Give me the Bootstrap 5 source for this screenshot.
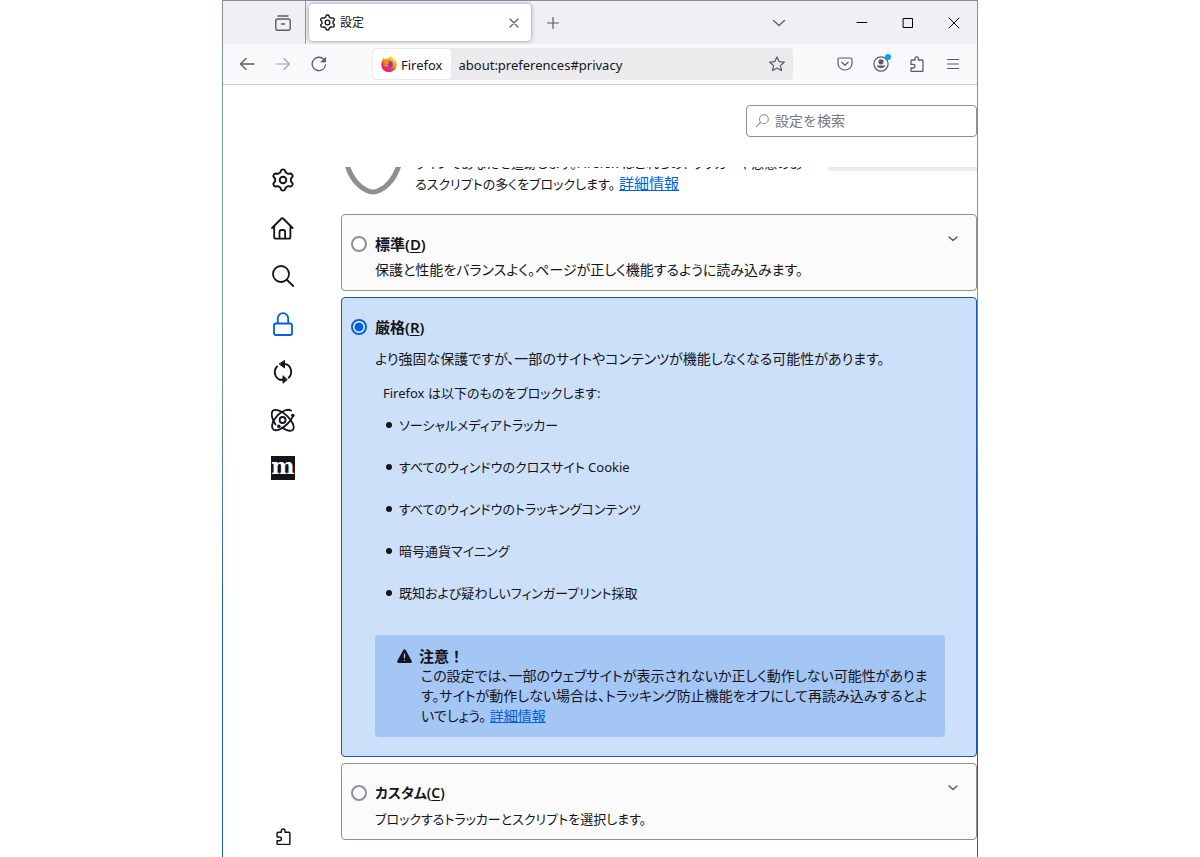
<!DOCTYPE html>
<html lang="ja">
<head>
<meta charset="utf-8">
<meta name="viewport" content="width=device-width, initial-scale=1">
<title>設定</title>
<link rel="stylesheet" href="https://cdn.jsdelivr.net/npm/bootstrap@5.3.0/dist/css/bootstrap.min.css">
<style>
:root { --ink: #15141a; --accent: #0060df; --line: #8f8f9d; --chrome: #5b5b66; }
body { font-family: "Noto Sans", "Noto Sans CJK JP", sans-serif; font-size: 14px; line-height: 20px; color: var(--ink); background: #fff; font-feature-settings: "palt"; }
svg { display: block; flex: none; fill: none; stroke: currentColor; stroke-linecap: round; stroke-linejoin: round; }
svg.solid { stroke: none; }
svg.shield { stroke: #8f8f8f; stroke-linecap: butt; }
a { color: var(--accent); }
.window { width: 63%; border: 1px solid; border-bottom: 0; border-image: linear-gradient(#7f909f, #76929f 45%, #1d5fb0 70%, #1d5fb0) 1; }
.latin { font-family: "Noto Sans", sans-serif; font-size: 13px; }
.icon-btn { border: 0; padding: 0; background: none; color: var(--chrome); display: flex; align-items: center; justify-content: center; flex: none; }
.tabstrip { height: 43px; background: #efeff4; }
.view-slot { width: 83px; padding-right: 14px; border-right: 1px solid #8f98a0; }
.browser-tab { width: 222px; height: 37px; border-radius: 4px; background: #fff; box-shadow: 0 0 4px rgba(0,0,0,.4); margin-left: 3px; padding: 0 10px; font-size: 12px; }
.toolbar { height: 41px; background: #f9f9fb; border-bottom: 1px solid #cccccf; padding: 0 16px; }
.urlbar { height: 32px; border-radius: 4px; background: #ebebed; margin-left: 45px; margin-right: 44px; min-width: 0; }
.identity { height: 30px; background: #fff; border-radius: 4px; padding: 0 8px; margin-left: 1px; }
.identity span { padding-top: 2px; }
.urlbar input { border: 0; background: none; outline: 0; min-width: 0; color: var(--ink); padding: 2px 8px 0; }
.account { position: relative; }
.account::after { content: ""; position: absolute; top: -2px; right: -2px; width: 6px; height: 6px; border-radius: 50%; background: #00a5f5; }
.side-nav { width: 118px; padding: 1px 0 9px 48px; }
.side-nav a { color: var(--ink); height: 24px; width: 24px; display: flex; align-items: center; justify-content: center; }
.side-nav a.active { color: var(--accent); }
.side-nav .moz { background: var(--ink); color: #fff; font: bold 22px/20px "DejaVu Serif", serif; text-decoration: none; padding-bottom: 4px; }
.page-head { height: 82px; padding-top: 20px; }
.search-box { width: 231px; height: 32px; border: 1px solid var(--line); border-radius: 4px; padding: 0 8px; color: #8a8a90; }
.search-box input { border: 0; outline: 0; background: none; min-width: 0; padding: 0 0 0 5px; }
.search-box input::placeholder { color: #77777c; opacity: 1; }
main { min-width: 0; }
.kana { font-size: 13px; }
.intro { height: 28px; }
.intro a { font-size: 15px; margin-left: 4px; }
.intro-text { margin-left: 14px; margin-bottom: 1px; }
.meter { width: 150px; height: 4px; background: #ececee; border-radius: 0 0 0 4px; }
.option { border: 1px solid var(--line); border-radius: 4px; background: #fbfbfb; padding: 16px 31px 7px 33px; line-height: 26px; }
.option.selected { border-color: #1259b8; background: #cce0f9; padding-bottom: 19px; }
.option-head { margin-left: -24px; margin-right: -14px; }
.option-head .form-check-input { width: 16px; height: 16px; margin: 0 8px 0 0; border: 2px solid var(--line); background: #fff; box-shadow: none; flex: none; }
.option-head .form-check-input:checked { border-color: var(--accent); background: radial-gradient(circle, var(--accent) 4px, #fff 5px); }
.option label { font-size: 15px; font-weight: 600; }
.option.kana label { font-size: 14px; }
.option u { text-underline-offset: 2px; }
.blocklist { padding-left: 11px; gap: 16px; margin: 6px 0 29px; }
.blocklist li { display: flex; align-items: center; gap: 7px; }
.blocklist li::before { content: ""; width: 6px; height: 6px; border-radius: 50%; background: currentColor; }
.notice { background: #a4c6f4; border-radius: 4px; padding: 11px 22px; line-height: 20px; }
.notice-title { gap: 7px; font-size: 15px; font-feature-settings: normal; }
.notice-body { padding-left: 24px; }
</style>
</head>
<body>
<div class="window mx-auto min-vh-100 d-flex flex-column">
  <header>
    <div class="tabstrip d-flex align-items-center">
      <div class="view-slot d-flex align-items-center justify-content-end align-self-stretch">
        <button class="icon-btn" aria-label="Firefox View"><svg width="16" height="16" viewBox="0 0 16 16" stroke-width="1.400"><path d="M3 1h10M2.800 4h10.400q2 0 2 2v7.200q0 2-2 2H2.800q-2 0-2-2V6q0-2 2-2zM6.500 9h3"/></svg></button>
      </div>
      <div class="browser-tab d-flex align-items-center">
        <svg width="17" height="17" viewBox="0 0 24 24" stroke-width="1.900"><path d="M9.300 4.500L10 2.500Q10.360 1.400 12 1.400T14 2.500L14.700 4.500L17.140 5.870L19.200 5.500Q20.500 5.300 21.300 6.800T21.300 9L19.880 10.610V13.390L21.300 15Q22.200 15.800 21.300 17.200T19.200 18.500L17.140 18.130L14.700 19.500L14 21.500Q13.640 22.600 12 22.600T10 21.500L9.300 19.500L6.860 18.130L4.800 18.500Q3.500 18.700 2.700 17.200T2.700 15L4.120 13.390V10.610L2.700 9Q1.800 8.200 2.700 6.800T4.800 5.500L6.860 5.870Z"/><circle cx="12" cy="12" r="3.300"/></svg>
        <span class="ms-1 me-auto">設定</span>
        <button class="icon-btn" aria-label="タブを閉じる"><svg width="14" height="14" viewBox="0 0 14 14" stroke-width="1.200"><path d="M3 3l8 8M11 3l-8 8"/></svg></button>
      </div>
      <button class="icon-btn ms-3" aria-label="新しいタブ"><svg width="12" height="12" viewBox="0 0 12 12" stroke-width="1.200"><path d="M6 .5v11M.5 6h11"/></svg></button>
      <button class="icon-btn ms-auto" aria-label="タブ一覧"><svg width="14" height="14" viewBox="0 0 14 14" stroke-width="1.200"><path d="M1.500 4.500l5.500 5 5.500-5"/></svg></button>
      <div class="d-flex align-items-center" style="gap:34px;padding:0 17px 0 70px">
        <button class="icon-btn text-black" aria-label="最小化"><svg width="12" height="12" viewBox="0 0 12 12"><path d="M1 5.500h10"/></svg></button>
        <button class="icon-btn text-black" aria-label="最大化"><svg width="12" height="12" viewBox="0 0 12 12"><path d="M1.500 1.500h9v9h-9z"/></svg></button>
        <button class="icon-btn text-black" aria-label="閉じる"><svg width="12" height="12" viewBox="0 0 12 12"><path d="M1 1l10 10M11 1L1 11"/></svg></button>
      </div>
    </div>
    <nav class="toolbar d-flex align-items-center">
      <button class="icon-btn" aria-label="戻る"><svg width="16" height="16" viewBox="0 0 16 16" stroke-width="1.300"><path d="M15 8H1.500M7 2.500L1.500 8 7 13.500"/></svg></button>
      <button class="icon-btn" style="margin:0 20px" disabled aria-label="進む"><svg class="opacity-50" width="16" height="16" viewBox="0 0 16 16" stroke-width="1.200"><path d="M1 8h13.500M9 2.500L14.500 8 9 13.500"/></svg></button>
      <button class="icon-btn" aria-label="再読み込み"><svg width="16" height="16" viewBox="0 0 16 16" stroke-width="1.300"><path d="M14.500 9A6.700 6.700 0 1 1 12.800 3.400L14 4.600"/><path d="M14.600 1.600V6h-4.400z" fill="currentColor" stroke-width=".8"/></svg></button>
      <div class="urlbar d-flex align-items-center flex-grow-1">
        <div class="identity d-flex align-items-center gap-1 latin">
          <svg class="solid" width="16" height="16" viewBox="0 0 16 16">
            <defs><linearGradient id="flame" x1=".85" y1=".1" x2=".3" y2="1"><stop offset="0" stop-color="#ffe226"/><stop offset=".4" stop-color="#ff980e"/><stop offset=".7" stop-color="#ff3647"/><stop offset="1" stop-color="#e31587"/></linearGradient></defs>
            <path fill="url(#flame)" d="M1.300 4.200L2.800 1.800Q3 3 3.800 3.300Q5 2.600 6 2.700Q8.200 2.200 9.600 0Q12.200 1.600 13 4L13.600 3.200Q16 6 15.700 9A7.700 7.200 0 0 1 .3 8.800Q.2 6 1.300 4.200z"/>
            <circle cx="8.200" cy="8.200" r="3.500" fill="#7341d8"/><path fill="#ff8a16" d="M2.700 5.400Q5 4 7.500 5.500L9 6.200Q8 7.700 6.700 7.600Q5.700 9 8.300 9.800Q6 12 3.600 9.800Q2 8 2.700 5.400z"/>
          </svg>
          <span>Firefox</span>
        </div>
        <input class="latin flex-grow-1" type="text" value="about:preferences#privacy" aria-label="アドレス">
        <button class="icon-btn me-2" aria-label="ブックマーク"><svg width="16" height="16" viewBox="0 0 16 16" stroke-width="1.200"><path d="M8 .9l2.100 4.700 5.100.6-3.800 3.400 1.100 5L8 12.100l-4.500 2.500 1.100-5L.8 6.200l5.100-.6z"/></svg></button>
      </div>
      <div class="d-flex align-items-center" style="gap:20px">
        <button class="icon-btn" aria-label="Pocket"><svg width="16" height="16" viewBox="0 0 16 16" stroke-width="1.200"><path d="M2.500 2h11q1.500 0 1.500 1.500v4a7 6.500 0 0 1-14 0v-4Q1 2 2.500 2zM4.800 6.300L8 9.200l3.200-2.900"/></svg></button>
        <button class="icon-btn account" aria-label="アカウント"><svg width="16" height="16" viewBox="0 0 16 16" stroke-width="1.200"><circle cx="8" cy="8" r="7.100"/><g fill="currentColor" stroke="none"><circle cx="8" cy="5.800" r="2.600"/><path d="M3.800 9.500h8.400q.5 0 .2.600a5 4 0 0 1-8.800 0q-.3-.6.200-.6z"/></g></svg></button>
        <button class="icon-btn" aria-label="拡張機能"><svg width="16" height="16" viewBox="0 0 16 16" stroke-width="1.300"><path d="M2 7.400V5q0-1 1-1H6V2.600a1.700 1.700 0 0 1 3.400 0V4h3.600q1 0 1 1v9.500q0 1-1 1H3q-1 0-1-1V12h2.200a1.800 1.800 0 0 0 0-3.600H2z"/></svg></button>
        <button class="icon-btn" aria-label="メニュー"><svg width="16" height="16" viewBox="0 0 16 16" stroke-width="1.200"><path d="M2.500 3.500h11M2.500 8h11M2.500 12.500h11"/></svg></button>
      </div>
    </nav>
  </header>

  <div class="page-head d-flex justify-content-end flex-shrink-0">
    <div class="search-box d-flex align-items-center">
      <svg width="15" height="16" viewBox="0 0 16 16" stroke-width="1.100"><circle cx="9.500" cy="6" r="4.700"/><path d="M6 9.500L1.500 14"/></svg>
      <input class="flex-grow-1" type="search" placeholder="設定を検索" aria-label="設定を検索">
    </div>
  </div>

  <div class="d-flex flex-grow-1">
    <nav class="side-nav d-flex flex-column gap-4 flex-shrink-0">
      <a href="#general" aria-label="一般"><svg width="24" height="26" viewBox="0 0 24 24" stroke-width="1.900"><path d="M9.300 4.500L10 2.500Q10.360 1.400 12 1.400T14 2.500L14.700 4.500L17.140 5.870L19.200 5.500Q20.500 5.300 21.300 6.800T21.300 9L19.880 10.610V13.390L21.300 15Q22.200 15.800 21.300 17.200T19.200 18.500L17.140 18.130L14.700 19.500L14 21.500Q13.640 22.600 12 22.600T10 21.500L9.300 19.500L6.860 18.130L4.800 18.500Q3.500 18.700 2.700 17.200T2.700 15L4.120 13.390V10.610L2.700 9Q1.800 8.200 2.700 6.800T4.800 5.500L6.860 5.870Z"/><circle cx="12" cy="12" r="3.300"/></svg></a>
      <a href="#home" aria-label="ホーム"><svg width="24" height="24" viewBox="0 0 24 24" stroke-width="1.800"><path d="M1 12L10.500 2.500q.8-.8 1.600 0L21.600 12M3.200 10v11q0 1.700 1.700 1.700h12.800q1.700 0 1.700-1.700V10M8.500 22.500V16q0-2 2-2h1.600q2 0 2 2v6.500"/></svg></a>
      <a href="#search" aria-label="検索"><svg width="24" height="24" viewBox="0 0 24 24" stroke-width="1.800"><circle cx="10" cy="10" r="8"/><path d="M16 16l6.300 6"/></svg></a>
      <a href="#privacy" class="active" aria-label="プライバシーとセキュリティ"><svg width="24" height="24" viewBox="0 0 24 24" stroke-width="1.800"><path d="M5 11.500h14q2 0 2 2v7.500q0 2-2 2H5q-2 0-2-2v-7.500q0-2 2-2zM6.800 11.500V6.300a5.200 5.200 0 0 1 10.400 0v5.200"/></svg></a>
      <a href="#sync" aria-label="同期"><svg width="24" height="24" viewBox="0 0 24 24" stroke-width="1.900"><path d="M6.200 6.400A8.200 8.200 0 0 0 9 19.800M17.800 17.600A8.200 8.200 0 0 0 15 4.200H12M9 19.800h3"/><path fill="currentColor" stroke-width="1" d="M13.500 .8v7L8.500 4.200zM12 16.200v7l4-3.500z"/></svg></a>
      <a href="#experimental" aria-label="Firefox Labs"><svg width="24" height="24" viewBox="0 0 24 24" stroke-width="1.800"><path d="M4.500 16.500C.5 11 -.1 5 1.900 2.700C4.500 .3 11 3 16 7.800C21.500 13 24 19 22 21.600C20 23.900 15 22.500 11 19.500"/><path d="M20 2.600C17 .3 10.600 3 6.600 7.400C2 12.300-.2 18 1.900 21C4.400 23.900 11 21.300 16.300 16C19 13.300 20.800 11 21.600 9"/><circle cx="11.600" cy="12" r="3"/><g fill="currentColor" stroke="none"><circle cx="21.800" cy="7.500" r="1.800"/><circle cx="7.800" cy="18.300" r="1.800"/></g></svg></a>
      <a href="#more" class="moz" aria-label="Mozilla の他の製品">m</a>
      <a href="#addons" class="mt-auto" aria-label="拡張機能とテーマ"><svg width="17" height="17" viewBox="0 0 16 16" stroke-width="1.400"><path d="M2 7.400V5q0-1 1-1H6V2.600a1.700 1.700 0 0 1 3.400 0V4h3.600q1 0 1 1v9.500q0 1-1 1H3q-1 0-1-1V12h2.200a1.800 1.800 0 0 0 0-3.600H2z"/></svg></a>
    </nav>

    <main class="flex-grow-1">
      <div class="intro kana d-flex align-items-end overflow-hidden">
        <svg class="shield align-self-start ms-1" width="56" height="28" viewBox="0 0 56 28" stroke-width="5"><path d="M2-2Q8 17 22 23.500q6 3 12 0Q48 17 54-2"/></svg>
        <div class="intro-text text-nowrap">ラインであなたを追跡します。Firefox はこれらのトラッカーや悪意のあ<br>るスクリプトの多くをブロックします。<a href="#learn">詳細情報</a></div>
        <div class="meter ms-auto align-self-start"></div>
      </div>

      <form class="d-flex flex-column" style="gap:6px;margin-top:19px">
        <section class="option">
          <div class="option-head d-flex align-items-center">
            <input class="form-check-input" type="radio" name="protection" id="standard"><label for="standard">標準(<u>D</u>)</label>
            <button type="button" class="icon-btn ms-auto align-self-start pt-1" aria-label="詳細を表示"><svg width="12" height="12" viewBox="0 0 12 12" stroke-width="1.500"><path d="M2 2l4 3.500L10 2"/></svg></button>
          </div>
          <div>保護と性能をバランスよく。ページが正しく機能するように読み込みます。</div>
        </section>

        <section class="option selected">
          <div class="option-head d-flex align-items-center">
            <input class="form-check-input" type="radio" name="protection" id="strict" checked><label for="strict">厳格(<u>R</u>)</label>
          </div>
          <div style="margin-top:6px">より強固な保護ですが、一部のサイトやコンテンツが機能しなくなる可能性があります。</div>
          <div class="kana mt-2 ms-2">Firefox は以下のものをブロックします:</div>
          <ul class="blocklist kana d-flex flex-column">
            <li>ソーシャルメディアトラッカー</li>
            <li>すべてのウィンドウのクロスサイト Cookie</li>
            <li>すべてのウィンドウのトラッキングコンテンツ</li>
            <li>暗号通貨マイニング</li>
            <li>既知および疑わしいフィンガープリント採取</li>
          </ul>
          <div class="notice">
            <div class="notice-title d-flex align-items-center fw-semibold">
              <svg class="solid" width="15" height="15" viewBox="0 0 16 16"><path fill="currentColor" d="M6.600 1.300q1.400-1.900 2.800 0l6.200 11.200q.9 2.500-1.400 2.500H1.800q-2.300 0-1.400-2.500z"/><path stroke="#a4c6f4" stroke-width="1.400" d="M8 5.200v4M8 11.900v.1"/></svg>
              <span>注意！</span>
            </div>
            <div class="notice-body text-nowrap">この設定では、一部のウェブサイトが表示されないか正しく動作しない可能性がありま<br>す。サイトが動作しない場合は、トラッキング防止機能をオフにして再読み込みするとよ<br>いでしょう。 <a href="#learn">詳細情報</a></div>
          </div>
        </section>

        <section class="option kana">
          <div class="option-head d-flex align-items-center">
            <input class="form-check-input" type="radio" name="protection" id="custom"><label for="custom">カスタム(<u>C</u>)</label>
            <button type="button" class="icon-btn ms-auto align-self-start pt-1" aria-label="詳細を表示"><svg width="12" height="12" viewBox="0 0 12 12" stroke-width="1.500"><path d="M2 2l4 3.500L10 2"/></svg></button>
          </div>
          <div>ブロックするトラッカーとスクリプトを選択します。</div>
        </section>
      </form>
    </main>
  </div>
</div>
<script src="https://cdn.jsdelivr.net/npm/bootstrap@5.3.0/dist/js/bootstrap.bundle.min.js"></script>
</body>
</html>
